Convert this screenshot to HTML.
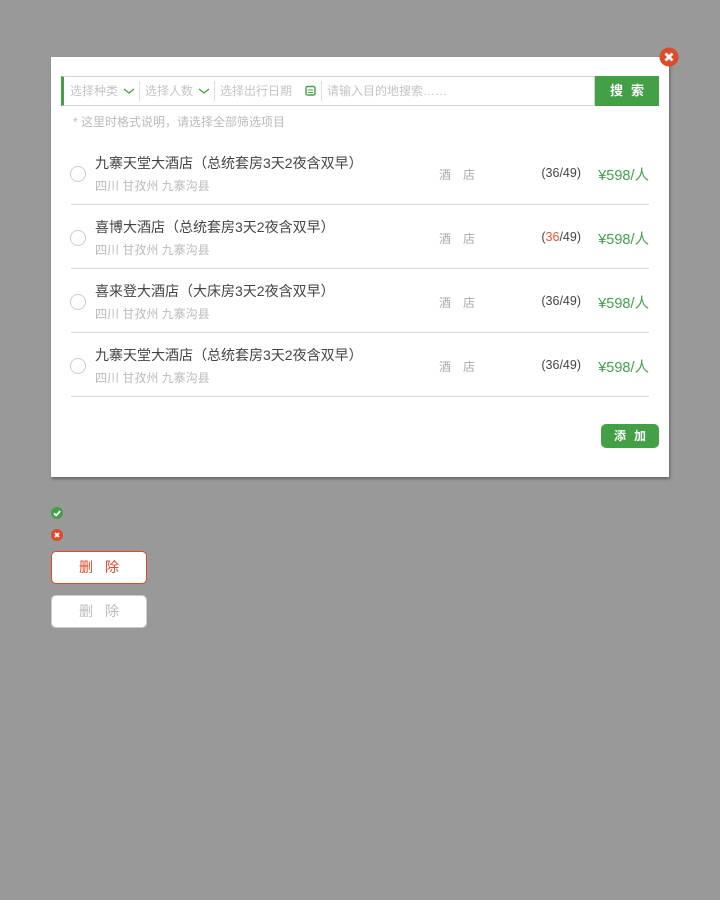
<!DOCTYPE html>
<html><head><meta charset="utf-8"><style>
*{margin:0;padding:0;box-sizing:border-box}
body{width:720px;height:900px;background:#999;position:relative;font-family:"Liberation Sans","Noto Sans CJK SC",sans-serif;overflow:hidden}
.modal{position:absolute;left:51px;top:57px;width:618px;height:420px;background:#fff;box-shadow:1px 2px 3px rgba(0,0,0,.35)}
.abs{position:absolute}
.bar{position:absolute;left:10px;top:19px;width:534px;height:30px;border:1px solid #d4d4d4;border-left:3px solid #43a047}
.ph{position:absolute;top:5px;font-size:12px;color:#c4c4c4;white-space:nowrap}
.sep{position:absolute;top:4px;width:1px;height:20px;background:#ddd}
.btn{position:absolute;left:544px;top:19px;width:64px;height:30px;background:#43a047;color:#fff;font-size:13px;font-weight:bold;text-align:center;line-height:30px;letter-spacing:8px;text-indent:8px}
.row{position:absolute;left:20px;width:578px;height:64px;border-bottom:1px solid #d6d6d6}
.radio{position:absolute;left:-1px;top:25px;width:16px;height:16px;border:1px solid #ccc;border-radius:50%}
.t{position:absolute;left:24px;top:12px;font-size:14px;color:#444;white-space:nowrap}
.s{position:absolute;left:24px;top:36px;font-size:12px;color:#bbb;white-space:nowrap}
.k{position:absolute;left:368px;top:25px;font-size:12px;color:#aaa;letter-spacing:12px}
.n{position:absolute;right:68px;top:25px;font-size:12.5px;color:#444}
.p{position:absolute;right:0;top:23px;font-size:14.5px;color:#43a047}
</style></head><body>
<div class="modal">
 <div class="bar">
  <span class="ph" style="left:6px">选择种类</span>
  <svg class="abs" style="left:59px;top:10px" width="12" height="8"><path d="M1 2l5 4 5-4" stroke="#43a047" stroke-width="1.3" fill="none"/></svg>
  <div class="sep" style="left:75px"></div>
  <span class="ph" style="left:81px">选择人数</span>
  <svg class="abs" style="left:134px;top:10px" width="12" height="8"><path d="M1 2l5 4 5-4" stroke="#43a047" stroke-width="1.3" fill="none"/></svg>
  <div class="sep" style="left:150px"></div>
  <span class="ph" style="left:156px">选择出行日期</span>
  <svg class="abs" style="left:241px;top:8px" width="11" height="11"><rect x="1" y="1.5" width="9" height="8.5" rx="1.5" fill="none" stroke="#43a047" stroke-width="1.4"/><path d="M3 5h5M3 7.5h5" stroke="#43a047" stroke-width="1"/></svg>
  <div class="sep" style="left:257px"></div>
  <span class="ph" style="left:263px">请输入目的地搜索……</span>
 </div>
 <div class="btn">搜索</div>
 <div class="abs" style="left:22px;top:56px;font-size:12px;color:#bbb">* 这里时格式说明，请选择全部筛选项目</div>
 <div class="row" style="top:84px"><div class="radio"></div><div class="t">九寨天堂大酒店（总统套房3天2夜含双早）</div><div class="s">四川 甘孜州 九寨沟县</div><div class="k">酒店</div><div class="n">(36/49)</div><div class="p">¥598/人</div></div>
 <div class="row" style="top:148px"><div class="radio"></div><div class="t">喜博大酒店（总统套房3天2夜含双早）</div><div class="s">四川 甘孜州 九寨沟县</div><div class="k">酒店</div><div class="n">(<span style="color:#e53">36</span>/49)</div><div class="p">¥598/人</div></div>
 <div class="row" style="top:212px"><div class="radio"></div><div class="t">喜来登大酒店（大床房3天2夜含双早）</div><div class="s">四川 甘孜州 九寨沟县</div><div class="k">酒店</div><div class="n">(36/49)</div><div class="p">¥598/人</div></div>
 <div class="row" style="top:276px"><div class="radio"></div><div class="t">九寨天堂大酒店（总统套房3天2夜含双早）</div><div class="s">四川 甘孜州 九寨沟县</div><div class="k">酒店</div><div class="n">(36/49)</div><div class="p">¥598/人</div></div>
 <div class="abs" style="left:550px;top:367px;width:58px;height:24px;background:#43a047;border-radius:5px;color:#fff;font-size:12px;font-weight:bold;text-align:center;line-height:24px;letter-spacing:8px;text-indent:8px">添加</div>
</div>
<svg class="abs" style="left:659px;top:47px" width="20" height="20"><circle cx="10" cy="10" r="9.5" fill="#e04a2a"/><path d="M6.5 6.5l7 7M13.5 6.5l-7 7" stroke="#fff" stroke-width="2.8"/></svg>
<svg class="abs" style="left:51px;top:507px" width="12" height="12"><circle cx="6" cy="6" r="6" fill="#43a047"/><path d="M3 6.2l2.2 2.2L9.2 4" stroke="#fff" stroke-width="1.8" fill="none"/></svg>
<svg class="abs" style="left:51px;top:529px" width="12" height="12"><circle cx="6" cy="6" r="6" fill="#e04a2a"/><path d="M4 4l4 4M8 4l-4 4" stroke="#fff" stroke-width="1.8"/></svg>
<div class="abs" style="left:51px;top:551px;width:96px;height:33px;background:#fff;border:1px solid #e04a2a;border-radius:5px;color:#e04a2a;font-size:14px;text-align:center;line-height:31px;letter-spacing:12px;text-indent:12px">删除</div>
<div class="abs" style="left:51px;top:595px;width:96px;height:33px;background:#fff;border:1px solid #ccc;border-radius:5px;color:#bbb;font-size:14px;text-align:center;line-height:31px;letter-spacing:12px;text-indent:12px">删除</div>
</body></html>
